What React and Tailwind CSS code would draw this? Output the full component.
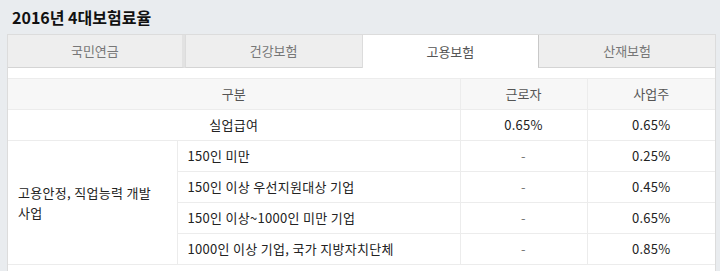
export default function App() {
  const font = { fontFamily: '"Noto Sans CJK KR", "Noto Sans", sans-serif' };
  const tabs = ["국민연금", "건강보험", "고용보험", "산재보험"];
  const rows = [
    ["150인 미만", "-", "0.25%"],
    ["150인 이상 우선지원대상 기업", "-", "0.45%"],
    ["150인 이상~1000인 미만 기업", "-", "0.65%"],
    ["1000인 이상 기업, 국가 지방자치단체", "-", "0.85%"],
  ];
  const td = "border border-[#ececec] h-[31px] text-[13px] text-[#222] px-[10px] tracking-[0.3px]";
  return (
    <div className="w-[720px] h-[271px] bg-[#e9ecef] overflow-hidden" style={font}>
      <div className="h-[34px] flex items-center pl-[12px] text-[16px] font-semibold text-[#111]">
        2016년 4대보험료율
      </div>
      <div className="ml-[7px] w-[709px] bg-white border border-[#dcdcdc] h-[300px]">
        <div className="grid grid-cols-4 h-[33px]">
          {tabs.map((t, i) =>
            i === 2 ? (
              <div key={t} className="flex items-center justify-center text-[13px] text-[#555] bg-white border-l border-[#dcdcdc]">
                {t}
              </div>
            ) : (
              <div
                key={t}
                className={
                  "flex items-center justify-center text-[13px] text-[#777] bg-[#eeeeee] border-b border-[#d4d4d4] " +
                  (i === 0 ? "border-r-[3px] border-r-[#e2e2e2]" : i === 1 ? "border-l border-l-[#dcdcdc]" : "border-l border-l-[#c8c8c8]")
                }
              >
                {t}
              </div>
            )
          )}
        </div>
        <div className="h-[10px]" />
        <table className="w-full border-collapse table-fixed">
          <colgroup>
            <col className="w-[169px]" />
            <col className="w-[283px]" />
            <col className="w-[127px]" />
            <col />
          </colgroup>
          <thead>
            <tr className="bg-[#f7f7f7]">
              <th colSpan={2} className="border border-[#ececec] border-l-0 h-[31px] text-[13px] font-normal text-[#555]">구분</th>
              <th className="border border-[#ececec] h-[31px] text-[13px] font-normal text-[#555]">근로자</th>
              <th className="border border-[#ececec] border-r-0 h-[31px] text-[13px] font-normal text-[#555]">사업주</th>
            </tr>
          </thead>
          <tbody>
            <tr>
              <td colSpan={2} className={td + " text-center border-l-0"}>실업급여</td>
              <td className={td + " text-center"}>0.65%</td>
              <td className={td + " text-center border-r-0"}>0.65%</td>
            </tr>
            {rows.map((r, i) => (
              <tr key={i}>
                {i === 0 && (
                  <td rowSpan={4} className={td + " border-l-0 leading-[20px] align-middle"}>
                    고용안정, 직업능력 개발
                    <br />
                    사업
                  </td>
                )}
                <td className={td}>{r[0]}</td>
                <td className={td + " text-center text-[#777]"}>{r[1]}</td>
                <td className={td + " text-center border-r-0"}>{r[2]}</td>
              </tr>
            ))}
          </tbody>
        </table>
      </div>
    </div>
  );
}
